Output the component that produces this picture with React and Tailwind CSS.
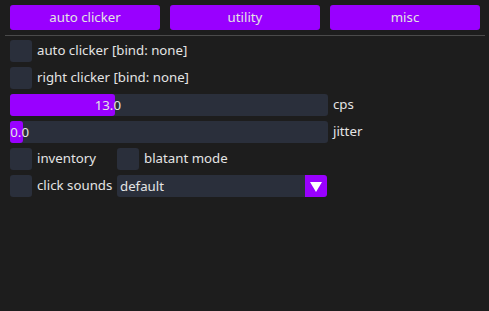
const font = { fontFamily: '"Noto Sans", "Open Sans", sans-serif' };

function Check({ label }) {
  return (
    <div className="flex h-[22px] items-center gap-[5px]">
      <div className="h-[22px] w-[22px] shrink-0 rounded-[3px] bg-[#2a2f3b]" />
      <span>{label}</span>
    </div>
  );
}

function Slider({ value, pct, label }) {
  return (
    <div className="flex h-[22px] items-center gap-[5px]">
      <div className="relative h-[22px] w-[318px] shrink-0 rounded-[3px] bg-[#2a2f3b]">
        <div className="relative h-full rounded-[3px] bg-[#9900ff]" style={{ width: pct }}>
          <span className="absolute right-[-6px] top-0 leading-[22px]">{value}</span>
        </div>
      </div>
      <span>{label}</span>
    </div>
  );
}

export default function App() {
  return (
    <div
      className="h-[311px] w-[489px] bg-[#1d1d1d] text-[13.25px] text-[#e4e4e4]"
      style={font}
    >
      <div className="flex gap-[10px] px-[10px] pt-[5px]">
        {['auto clicker', 'utility', 'misc'].map((t) => (
          <button
            key={t}
            className="h-[25px] w-[150px] shrink-0 rounded-[3px] bg-[#9900ff] text-center leading-[25px]"
          >
            {t}
          </button>
        ))}
      </div>
      <div className="mx-[5px] mt-[5px] h-px w-[480px] bg-[#4a4a4a]" />
      <div className="flex flex-col gap-[5px] px-[10px] pt-[4px]">
        <Check label="auto clicker [bind: none]" />
        <Check label="right clicker [bind: none]" />
        <Slider value="13.0" pct="105px" label="cps" />
        <Slider value="0.0" pct="13px" label="jitter" />
        <div className="flex gap-[13px]">
          <div className="w-[94px]">
            <Check label="inventory" />
          </div>
          <Check label="blatant mode" />
        </div>
        <div className="flex h-[22px] items-center gap-[5px]">
          <div className="h-[22px] w-[22px] shrink-0 rounded-[3px] bg-[#2a2f3b]" />
          <span className="w-[75px] shrink-0 whitespace-nowrap">click sounds</span>
          <div className="flex h-[22px] w-[210px] shrink-0">
            <div className="flex-1 rounded-l-[3px] bg-[#2a2f3b] pl-[3px] leading-[22px]">
              default
            </div>
            <div className="flex w-[22px] items-center justify-center rounded-r-[3px] bg-[#9900ff]">
              <svg width="12" height="11" viewBox="0 0 12 11">
                <polygon points="0,1 12,1 6,11" fill="#ffffff" />
              </svg>
            </div>
          </div>
        </div>
      </div>
    </div>
  );
}
